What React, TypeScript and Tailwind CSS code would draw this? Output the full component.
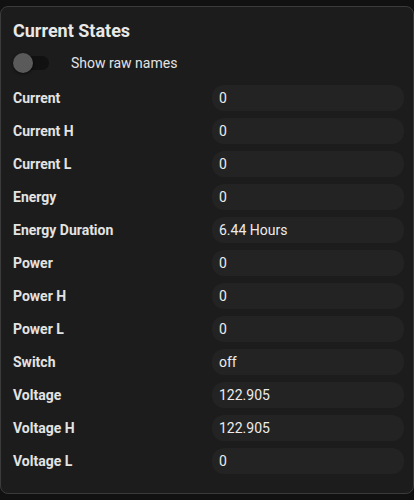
import React from 'react';

interface StateRow {
  name: string;
  value: string;
}

const rows: StateRow[] = [
  { name: 'Current', value: '0' },
  { name: 'Current H', value: '0' },
  { name: 'Current L', value: '0' },
  { name: 'Energy', value: '0' },
  { name: 'Energy Duration', value: '6.44 Hours' },
  { name: 'Power', value: '0' },
  { name: 'Power H', value: '0' },
  { name: 'Power L', value: '0' },
  { name: 'Switch', value: 'off' },
  { name: 'Voltage', value: '122.905' },
  { name: 'Voltage H', value: '122.905' },
  { name: 'Voltage L', value: '0' },
];

export default function App() {
  return (
    <div
      className="h-[500px] w-[414px] overflow-hidden bg-[#111111] pt-[6px]"
      style={{ fontFamily: 'Roboto, "Liberation Sans", sans-serif' }}
    >
      <div className="h-[488px] rounded-lg border border-[#3b3b3b] bg-[#1c1c1c] pl-[12px] pr-[9px] pt-[12px]">
        {/* Заголовок */}
        <div className="text-[18px] font-bold leading-[24px] text-[#e8e8e8]">Current States</div>

        {/* Переключатель */}
        <div className="mt-[8px] flex h-[24px] items-center">
          <div className="relative h-[14px] w-[36px] rounded-full bg-[#111111]">
            <div className="absolute -top-[3px] left-0 h-[20px] w-[20px] rounded-full bg-[#5a5a5a] shadow-[0_1px_3px_rgba(0,0,0,0.6)]" />
          </div>
          <span className="ml-[22px] text-[14px] text-[#e3e3e3]">Show raw names</span>
        </div>

        {/* Список состояний */}
        <div className="mt-[10px] flex flex-col gap-[7px]">
          {rows.map((row) => (
            <div key={row.name} className="grid grid-cols-[199px_1fr] items-center">
              <div className="text-[14px] font-bold text-[#e3e3e3]">{row.name}</div>
              <div className="flex h-[26px] items-center rounded-xl bg-[#232323] px-[7px] text-[14px] text-[#ececec]">
                {row.value}
              </div>
            </div>
          ))}
        </div>
      </div>
    </div>
  );
}
